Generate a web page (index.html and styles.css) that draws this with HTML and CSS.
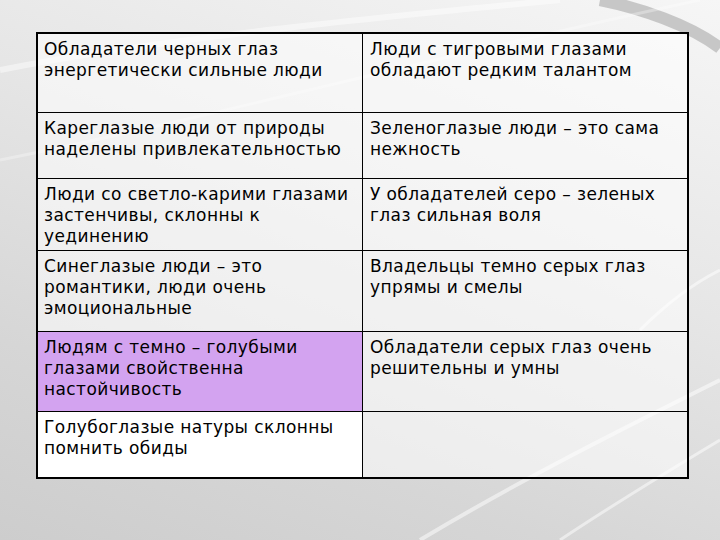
FILE: index.html
```html
<!DOCTYPE html>
<html lang="ru">
<head>
<meta charset="utf-8">
<title>Цвет глаз</title>
<link rel="stylesheet" href="styles.css">
</head>
<body>
<div class="slide">
  <svg class="bg" width="720" height="540" viewBox="0 0 720 540" aria-hidden="true">
    <path d="M600 0 C 640 8, 690 25, 720 48" fill="none" stroke="#bcbcbc" stroke-width="12" opacity="0.8"/>
    <path d="M0 70 C 150 40, 350 20, 560 0" fill="none" stroke="#ffffff" stroke-width="6" opacity="0.45"/>
    <path d="M0 160 C 200 120, 420 60, 700 0" fill="none" stroke="#ffffff" stroke-width="3" opacity="0.3"/>
    <path d="M420 540 C 520 480, 620 430, 720 380" fill="none" stroke="#ffffff" stroke-width="4" opacity="0.5"/>
    <path d="M560 540 C 620 500, 670 470, 720 440" fill="none" stroke="#ffffff" stroke-width="3" opacity="0.5"/>
    <path d="M640 330 C 670 300, 700 280, 720 270" fill="none" stroke="#ffffff" stroke-width="3" opacity="0.5"/>
  </svg>
  <div class="table">
    <div class="cell r1">Обладатели черных глаз энергетически сильные люди</div>
    <div class="cell r1 right">Люди с тигровыми глазами обладают редким талантом</div>
    <div class="cell r2">Кареглазые люди от природы наделены привлекательностью</div>
    <div class="cell r2 right">Зеленоглазые люди – это сама нежность</div>
    <div class="cell r3">Люди со светло-карими глазами застенчивы, склонны к уединению</div>
    <div class="cell r3 right">У обладателей серо – зеленых глаз сильная воля</div>
    <div class="cell r4">Синеглазые люди – это романтики, люди очень эмоциональные</div>
    <div class="cell r4 right">Владельцы темно серых глаз упрямы и смелы</div>
    <div class="cell r5 purple">Людям с темно – голубыми глазами свойственна настойчивость</div>
    <div class="cell r5 right">Обладатели серых глаз очень решительны и умны</div>
    <div class="cell r6 white last">Голубоглазые натуры склонны помнить обиды</div>
    <div class="cell r6 right last"></div>
  </div>
</div>
</body>
</html>
```

FILE: styles.css
```css
html, body {
  margin: 0;
  padding: 0;
}
body {
  width: 720px;
  height: 540px;
  overflow: hidden;
}
.slide {
  position: relative;
  width: 720px;
  height: 540px;
  background: linear-gradient(200deg, #f6f6f6 0%, #e6e6e6 40%, #d6d6d6 75%, #cdcdcd 100%);
  padding: 32px 0 0 36px;
  box-sizing: border-box;
  font-family: "DejaVu Sans", Verdana, sans-serif;
}
.bg {
  position: absolute;
  left: 0;
  top: 0;
  z-index: 0;
}
.table {
  position: relative;
  z-index: 1;
  width: 653px;
  border: 2px solid #000;
  box-sizing: border-box;
  display: grid;
  grid-template-columns: 325px 324px;
  grid-template-rows: 79px 66px 72px 81px 80px 65px;
}
.cell {
  box-sizing: border-box;
  border-right: 1px solid #000;
  border-bottom: 1px solid #000;
  padding: 5px 6px 0 6px;
  font-size: 17px;
  letter-spacing: 0.4px;
  line-height: 21px;
  color: #000;
  background: rgba(255, 255, 255, 0.55);
}
.cell.right {
  border-right: none;
  padding-left: 7px;
}
.cell.last {
  border-bottom: none;
}
.cell.purple {
  background: #d3a3f0;
}
.cell.white {
  background: #ffffff;
}
```
